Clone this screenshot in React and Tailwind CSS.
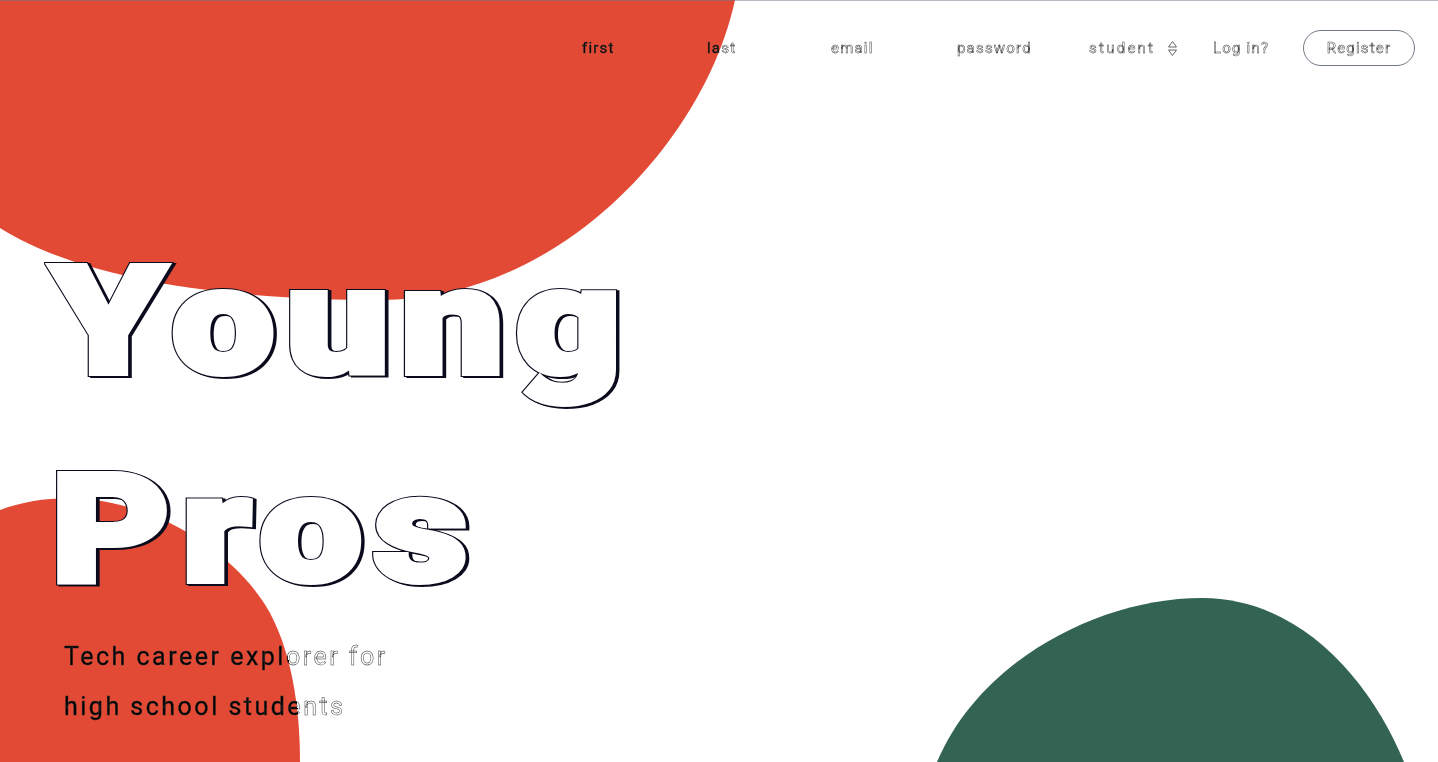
import React from 'react';
import clsx from 'clsx';

// text that reads dark over the blobs and as a thin outline over white
const Ink = ({ children, className }) => (
  <span className={clsx('relative inline-block', className)}>
    <span className="text-black mix-blend-color-burn">{children}</span>
    <span aria-hidden="true" className="pointer-events-none absolute inset-0 text-transparent [-webkit-text-stroke:0.45px_#2b2b2b]">
      {children}
    </span>
  </span>
);

const Blobs = () => (
  <svg className="absolute inset-0 h-full w-full" viewBox="0 0 1438 762" preserveAspectRatio="none">
    <path d="M0 0 L735 0 C705 140 560 300 380 300 C250 300 90 285 0 228 Z" fill="#e34a35" />
    <path d="M0 510 C110 470 230 540 270 613 C295 660 300 720 300 762 L0 762 Z" fill="#e34a35" />
    <path d="M937 762 C980 660 1100 598 1202 598 C1300 598 1370 680 1404 762 Z" fill="#336453" />
  </svg>
);

const SortIcon = () => (
  <svg width="11" height="17" viewBox="0 0 11 17" fill="none" stroke="#555" strokeWidth="0.9">
    <path d="M5.5 1.5 L9.5 7 L1.5 7 Z" />
    <path d="M5.5 15.5 L9.5 10 L1.5 10 Z" />
  </svg>
);

const fields = [
  { label: 'first', w: 'w-[125px]' },
  { label: 'last', w: 'w-[124px]' },
  { label: 'email', w: 'w-[126px]' },
  { label: 'password', w: 'w-[132px]' },
];

const Title = () => (
  <h1 className="relative origin-left scale-x-[1.22] font-['Roboto',sans-serif] text-[150px] font-black leading-[208px] tracking-[0.063em]">
    <span aria-hidden="true" className="absolute inset-0 translate-x-[2px] translate-y-px text-[#0b0b1e] [-webkit-text-stroke:8px_#0b0b1e]">
      Young
      <br />
      Pros
    </span>
    <span aria-hidden="true" className="absolute inset-0 text-[#0b0b1e] [-webkit-text-stroke:8px_#0b0b1e]">
      Young
      <br />
      Pros
    </span>
    <span className="relative text-white [-webkit-text-stroke:6px_#fff]">
      Young
      <br />
      Pros
    </span>
  </h1>
);

export default function App() {
  return (
    <div className="relative h-screen w-full overflow-hidden bg-white">
      <Blobs />
      <div className="absolute inset-x-0 top-0 h-px bg-gray-500/50" />

      <div className="relative flex h-full flex-col">
        {/* ============ sign up bar ============ */}
        <header className="flex h-24 items-center justify-end pr-[23px] font-['Roboto',sans-serif] text-[15px] tracking-[0.08em]">
          {fields.map((f) => (
            <div key={f.label} className={f.w}>
              <Ink>{f.label}</Ink>
            </div>
          ))}
          <div className="flex w-[124px] items-center">
            <Ink className="tracking-[0.15em]">student</Ink>
            <span className="ml-[12px] flex items-center">
              <SortIcon />
            </span>
          </div>
          <div className="w-[90px]">
            <Ink>Log in?</Ink>
          </div>
          <button className="flex h-9 w-[112px] items-center justify-center rounded-full border border-gray-700/70">
            <Ink>Register</Ink>
          </button>
        </header>

        {/* ============ hero ============ */}
        <main className="pl-[51px] pt-[122px]">
          <Title />
          <div className="-mt-[2px] pl-[13px] font-['Roboto',sans-serif] text-[25px] leading-[50px] tracking-[0.1em]">
            <Ink>
              Tech career explorer for
              <br />
              high school students
            </Ink>
          </div>
        </main>
      </div>
    </div>
  );
}
